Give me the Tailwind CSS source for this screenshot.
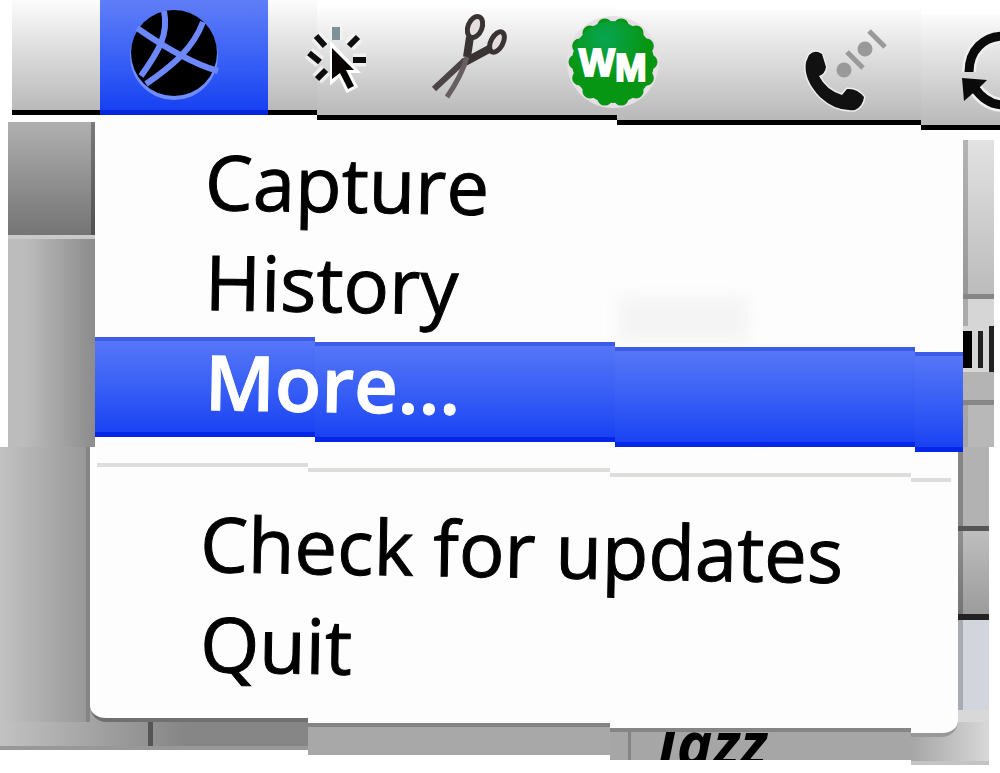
<!DOCTYPE html>
<html lang="en">
<head>
    <meta charset="UTF-8">
    <meta name="viewport" content="width=device-width, initial-scale=1.0">
    <title>Menu bar</title>
    <script src="https://cdn.jsdelivr.net/npm/@tailwindcss/browser@4"></script>
</head>
<body class="bg-white min-h-screen font-['Open_Sans','Noto_Sans',sans-serif] text-black">

    <!-- Menu bar -->
    <header class="relative z-20 h-[115px]">
        <div class="absolute inset-x-0 top-0 pl-3 grid grid-cols-[305fr_300fr_304fr_79fr] items-start">
            <div class="h-[115px] border-b-5 border-black bg-linear-to-b from-[#fcfcfc] to-[#b9b9b9]"></div>
            <div class="mt-[5px] h-[115px] border-b-5 border-black bg-linear-to-b from-white to-[#b9b9b9]"></div>
            <div class="mt-[10px] h-[115px] border-b-5 border-black bg-linear-to-b from-[#fbfbfb] to-[#b9b9b9]"></div>
            <div class="mt-[15px] h-[115px] border-b-5 border-black bg-linear-to-b from-[#fbfbfb] to-[#b9b9b9]"></div>
        </div>
        <nav class="relative flex pl-[100px] h-[115px] overflow-hidden">
            <button type="button" aria-label="Capture tool" class="w-[168px] shrink-0 h-[115px] border-b-5 border-[#0526dc] bg-linear-to-b from-[#5f7df7] to-[#1740f2]">
                <svg class="block" width="168" height="110" viewBox="100 0 168 110" fill="none">
                    <circle cx="174" cy="56" r="44" fill="#6f8dff"/>
                    <circle cx="174" cy="53" r="43" fill="#000"/>
                    <g stroke="#6c88fb" stroke-width="6">
                        <path d="M137 28C157 42 190 63 218 71"/>
                        <path d="M164 11C169 35 158 52 141 76"/>
                        <path d="M203 22C193 49 172 66 146 84"/>
                    </g>
                </svg>
            </button>
            <button type="button" aria-label="Click" class="w-[132px] shrink-0">
                <svg class="block" width="132" height="115" viewBox="268 0 132 115" fill="none">
                    <g stroke="#f4f4f4" stroke-width="13" opacity=".8">
                        <path d="M316 36l9 10M336 27v13M358 37l-9 9M353 60h13M309 53l11 9M317 79l9-9"/>
                    </g>
                    <path d="M333 48v31l7-6 8 16 6-3-8-16h8z" stroke="#fff" stroke-width="6" fill="#fff"/>
                    <g stroke="#0c0c0c" stroke-width="6">
                        <path d="M316 36l9 10M358 37l-9 9M353 60h13M309 53l11 9M317 79l9-9"/>
                        <path d="M336 27v13" stroke="#7c9296" stroke-width="8"/>
                    </g>
                    <path d="M332 48v31l8-6 8 16 6-3-8-16h8z" fill="#080404"/>
                </svg>
            </button>
            <button type="button" aria-label="Cut" class="w-[140px] shrink-0">
                <svg class="block" width="140" height="115" viewBox="400 0 140 115" fill="none" stroke="#3a3334">
                    <ellipse cx="475" cy="27" rx="7" ry="11" transform="rotate(22 475 27)" stroke-width="5" fill="#e4dede"/>
                    <ellipse cx="497" cy="42" rx="6" ry="11" transform="rotate(28 497 42)" stroke-width="5" fill="#e4dede"/>
                    <path d="M470 37L467 57" stroke-width="8"/>
                    <path d="M491 48L465 62" stroke-width="8"/>
                    <path d="M465 60L434 89" stroke-width="6" stroke="#4b4446"/>
                    <path d="M467 57Q462 75 447 97" stroke-width="5" stroke="#665e60"/>
                </svg>
            </button>
            <button type="button" aria-label="WM" class="w-[200px] shrink-0">
                <svg class="block" width="200" height="115" viewBox="540 0 200 115" fill="none">
                    <defs>
                        <radialGradient id="badge" gradientUnits="userSpaceOnUse" cx="605" cy="38" r="42">
                            <stop offset="0" stop-color="#08a552"/>
                            <stop offset="1" stop-color="#079613"/>
                        </radialGradient>
                    </defs>
                    <circle cx="613" cy="62" r="46" fill="#e6dfe5"/>
                    <circle cx="613" cy="62" r="37" stroke="#079613" stroke-width="15" stroke-linecap="round" pathLength="14" stroke-dasharray="0 1"/>
                    <circle cx="613" cy="62" r="41" fill="url(#badge)"/>
                    <text x="579" y="76" fill="#fff" stroke="#fff" stroke-width="2" font-family="Liberation Sans" font-weight="700" font-size="38">W<tspan dy="5">M</tspan></text>
                </svg>
            </button>
            <button type="button" aria-label="Call" class="w-[180px] shrink-0">
                <svg class="block" width="180" height="115" viewBox="740 0 180 115" fill="none">
                    <g stroke="#eee" stroke-width="3" fill="#111" paint-order="stroke">
                        <path d="M809 55Q815 49 822 54L826 67Q825 74 819 76Q826 90 842 95L847 89Q857 88 864 97Q863 106 855 110Q836 112 820 97Q803 79 806 62z"/>
                    </g>
                    <g stroke="#999" stroke-width="5">
                        <circle cx="844" cy="70" r="5" fill="#999"/>
                        <circle cx="865" cy="49" r="5" fill="#999"/>
                        <path d="M847 52l16 16M869 31l16 16"/>
                    </g>
                </svg>
            </button>
            <button type="button" aria-label="Refresh" class="w-20 shrink-0">
                <svg class="block" width="80" height="115" viewBox="920 0 80 115" fill="none">
                    <g stroke="#f0f0f0" stroke-width="14">
                        <path d="M969 72C969 50 984 36 1004 36M974 87Q986 105 1004 105"/>
                    </g>
                    <g stroke="#0a0a0a" stroke-width="9">
                        <path d="M969 72C969 50 984 36 1004 36M974 87Q986 105 1004 105"/>
                    </g>
                    <path d="M962 78L987 80L979 88L964 101z" fill="#0a0a0a"/>
                </svg>
            </button>
        </nav>
    </header>

    <main>
        <!-- Upper half of the menu -->
        <section class="relative z-10 flex h-[332px]">
            <div class="w-[95px] shrink-0 flex flex-col pl-2 pt-[7px]">
                <div class="h-[113px] bg-linear-to-b from-[#b0b0b0] to-[#747474] border-r-4 border-black/30"></div>
                <div class="flex-1 border-t-4 border-[#c9c9c9] bg-linear-to-r from-[#bcbcbc] from-20% to-[#8c8c8c]"></div>
            </div>
            <ul class="relative flex-1 bg-[#fdfdfd] pt-[22px] text-[76px] leading-[88px]">
                <!-- window text showing faintly through the menu -->
                <li aria-hidden="true" class="absolute right-[215px] bottom-[105px] w-[130px] h-[45px] bg-[#f4f4f4] blur-sm"></li>
                <li class="relative h-[100px]">
                    <button type="button" class="block w-full h-[100px] pl-[110px] text-left"><span class="block w-fit h-[100px] rotate-1 origin-left [-webkit-text-stroke:1px]">Capture</span></button>
                </li>
                <li class="relative h-[100px]">
                    <button type="button" class="block w-full h-[100px] pl-[110px] text-left"><span class="block w-fit h-[100px] rotate-1 origin-left [-webkit-text-stroke:1px]">History</span></button>
                </li>
                <li class="relative h-[100px]">
                    <div class="absolute inset-x-0 top-0 grid grid-cols-[220fr_300fr_300fr_48fr] items-start">
                        <div class="h-[100px] border-t-4 border-t-[#3c5be8] border-b-5 border-b-[#0526e6] bg-linear-to-b from-[#5676f7] to-[#1a42f3]"></div>
                        <div class="mt-[5px] h-[100px] border-t-4 border-t-[#3c5be8] border-b-5 border-b-[#0526e6] bg-linear-to-b from-[#5676f7] to-[#1a42f3]"></div>
                        <div class="mt-[10px] h-[100px] border-t-4 border-t-[#3c5be8] border-b-5 border-b-[#0526e6] bg-linear-to-b from-[#5676f7] to-[#1a42f3]"></div>
                        <div class="mt-[15px] h-[100px] border-t-4 border-t-[#3c5be8] border-b-5 border-b-[#0526e6] bg-linear-to-b from-[#5676f7] to-[#1a42f3]"></div>
                    </div>
                    <button type="button" class="relative block w-full h-[100px] pl-[110px] text-left text-white"><span class="block w-fit h-[100px] rotate-1 origin-left font-semibold [-webkit-text-stroke:1px]">More...</span></button>
                </li>
            </ul>
            <div class="w-[37px] shrink-0 flex flex-col pr-[6px] pt-[25px]">
                <div class="h-[154px] bg-linear-to-b from-[#e2e2e2] to-[#bcbcbc] border-l-5 border-black/20"></div>
                <div class="h-[5px] bg-[#868686]"></div>
                <div class="h-[27px] bg-[#d6d6d6] border-l-5 border-black/20"></div>
                <div class="h-[46px] flex items-center justify-between bg-[#d6d6d6]">
                    <div class="w-[9px] h-[37px] bg-black"></div>
                    <div class="w-[5px] h-[37px] bg-[#222]"></div>
                    <div class="w-[5px] h-[46px] bg-[#222]"></div>
                </div>
                <div class="h-[28px] bg-[#b4b4b4]"></div>
                <div class="h-[5px] bg-[#868686]"></div>
                <div class="flex-1 bg-[#b8b8b8] border-l-5 border-black/10"></div>
            </div>
        </section>

        <!-- Lower half, with the window behind it -->
        <section class="relative pb-[51px]">
            <div class="absolute inset-x-0 top-0 pr-[11px] grid grid-cols-[308fr_302fr_301fr_78fr] items-start">
                <div class="h-[303px] border-b-4 border-[#989898] bg-linear-to-r from-[#c2c2c2] to-[#868686] to-60% pl-[148px]">
                    <div class="h-full w-[5px] bg-[#555]"></div>
                </div>
                <div class="h-[308px] bg-[#a8a8a8]"></div>
                <div class="h-[313px] overflow-hidden bg-[#a6a6a6] pl-[18px] flex items-end">
                    <div class="h-[30px] w-[3px] bg-[#848484]"></div>
                    <div class="h-[31px] pl-[26px] text-[60px] leading-[28px] font-bold italic">Jazz</div>
                </div>
                <div class="h-[318px] border-b-4 border-[#c4c4c4] bg-linear-to-r from-[#a6a6a6] to-[#d8d8d8]"></div>
            </div>
            <div class="relative flex">
                <div class="w-[90px] shrink-0 border-r-4 border-[#858585] bg-linear-to-r from-[#c2c2c2] to-[#999999]"></div>
                <div class="relative flex-1">
                    <div class="absolute inset-0 grid grid-cols-[218fr_302fr_301fr_47fr]">
                        <div class="bg-[#fdfdfd] border-b-4 border-[#707070] rounded-bl-2xl"></div>
                        <div class="-mb-[5px] bg-[#fdfdfd] border-b-4 border-[#858585]"></div>
                        <div class="-mb-[10px] bg-[#fdfdfd] border-b-4 border-[#858585]"></div>
                        <div class="-mb-[15px] bg-[#fdfdfd] border-b-4 border-[#999999] rounded-br-2xl"></div>
                    </div>
                    <div class="relative pt-[16px] pb-[21px]">
                        <div role="separator" class="mx-[7px] h-[38px] grid grid-cols-[211fr_302fr_301fr_40fr] items-start">
                            <div class="h-[4px] bg-[#dddddb]"></div>
                            <div class="mt-[5px] h-[4px] bg-[#dddddb]"></div>
                            <div class="mt-[10px] h-[4px] bg-[#dddddb]"></div>
                            <div class="mt-[15px] h-[4px] bg-[#dddddb]"></div>
                        </div>
                        <ul class="text-[76px] leading-[84px]">
                            <li class="h-[100px]">
                                <button type="button" class="block w-full h-[100px] pl-[110px] text-left whitespace-nowrap"><span class="block w-fit h-[100px] rotate-1 origin-left [-webkit-text-stroke:1px]">Check for updates</span></button>
                            </li>
                            <li class="h-[100px]">
                                <button type="button" class="block w-full h-[100px] pl-[110px] text-left"><span class="block w-fit h-[100px] rotate-1 origin-left [-webkit-text-stroke:1px]">Quit</span></button>
                            </li>
                        </ul>
                    </div>
                </div>
                <div class="w-[42px] shrink-0 flex flex-col pr-[11px]">
                    <div class="h-[79px] bg-[#b2b2b2] border-l-5 border-black/25"></div>
                    <div class="h-[5px] bg-[#555]"></div>
                    <div class="h-[83px] bg-linear-to-b from-[#bebebe] to-[#9c9c9c] border-l-5 border-black/25"></div>
                    <div class="h-[6px] bg-[#222]"></div>
                    <div class="h-[90px] bg-[#d2d6dc] border-l-5 border-[#a8acb2]"></div>
                    <div class="flex-1 bg-[#d8d8d8]"></div>
                </div>
            </div>
        </section>
    </main>
</body>
</html>
